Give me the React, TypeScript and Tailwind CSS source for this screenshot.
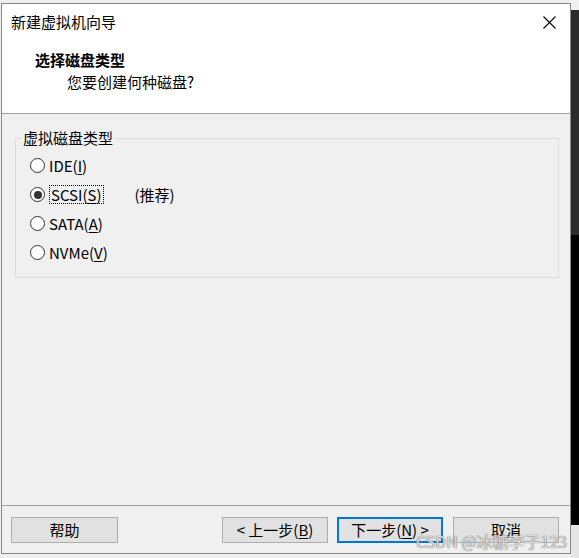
import React from "react";

const font = { fontFamily: '"Noto Sans CJK SC", "Noto Sans", sans-serif' };

function Radio({ checked }: { checked?: boolean }) {
  return (
    <span className="w-[15px] h-[15px] rounded-full border border-[#333333] bg-white flex items-center justify-center shrink-0">
      {checked && <span className="w-[8px] h-[8px] rounded-full bg-[#333333]" />}
    </span>
  );
}

function Row({ children, checked }: { children: React.ReactNode; checked?: boolean }) {
  return (
    <div className="h-[29px] flex items-center">
      <Radio checked={checked} />
      <div className="ml-[4px] flex items-center">{children}</div>
    </div>
  );
}

function Btn({ children, primary, className = "" }: { children: React.ReactNode; primary?: boolean; className?: string }) {
  return (
    <div
      className={
        "h-[26px] w-[106px] bg-[#e1e1e1] flex items-center justify-center text-[15px] leading-[20px] text-black " +
        (primary ? "border-2 border-[#0078d7] " : "border border-[#adadad] ") +
        className
      }
    >
      {children}
    </div>
  );
}

export default function App() {
  return (
    <div className="w-[579px] h-[558px] relative overflow-hidden bg-[#f0f0f0] flex" style={font}>
      <div className="w-[1px] shrink-0" />
      <div className="flex flex-col shrink-0">
        <div className="h-[3px]" />
        <div className="w-[570px] h-[551px] border border-[#888888] bg-[#f0f0f0] flex flex-col">
          {/* header */}
          <div className="h-[110px] bg-white border-b border-[#a0a0a0] flex flex-col shrink-0">
            <div className="mt-[8px] h-[20px] flex items-center justify-between pl-[9px] pr-[14px]">
              <span className="text-[15px] leading-[20px] text-black">新建虚拟机向导</span>
              <svg width="13" height="13" viewBox="0 0 13 13">
                <path d="M0.5 0.5 L12.5 12.5 M12.5 0.5 L0.5 12.5" stroke="#000" strokeWidth="1.1" fill="none" />
              </svg>
            </div>
            <div className="mt-[18px] ml-[33px] text-[15px] leading-[20px] font-bold text-black">选择磁盘类型</div>
            <div className="mt-[2px] ml-[65px] text-[15px] leading-[20px] text-black">您要创建何种磁盘?</div>
          </div>
          {/* body */}
          <div className="h-[391px] shrink-0 pt-[24px] pl-[13px] pr-[11px]">
            <div className="relative border border-[#dcdcdc] pt-[12px] pb-[10px] pl-[14px] text-[15px] leading-[20px] text-black">
              <span className="absolute left-[5px] top-[-11px] px-[2px] bg-[#f0f0f0] text-[15px] leading-[20px]">
                虚拟磁盘类型
              </span>
              <Row>
                <span>
                  IDE(<u className="underline-offset-[2px]">I</u>)
                </span>
              </Row>
              <Row checked>
                <span className="border border-dotted border-black px-[1px] leading-[17px]">
                  SCSI(<u className="underline-offset-[2px]">S</u>)
                </span>
                <span className="ml-[31px]">(推荐)</span>
              </Row>
              <Row>
                <span>
                  SATA(<u className="underline-offset-[2px]">A</u>)
                </span>
              </Row>
              <Row>
                <span>
                  NVMe(<u className="underline-offset-[2px]">V</u>)
                </span>
              </Row>
            </div>
          </div>
          {/* footer */}
          <div className="border-t border-[#a0a0a0] flex-1 flex pt-[11px] pl-[9px] pr-[11px]">
            <Btn className="w-[107px]">帮助</Btn>
            <div className="flex-1" />
            <Btn>
              &lt;&nbsp;上一步(<u className="underline-offset-[2px]">B</u>)
            </Btn>
            <Btn primary className="ml-[9px]">
              下一步(<u className="underline-offset-[2px]">N</u>)&nbsp;&gt;
            </Btn>
            <Btn className="ml-[10px]">取消</Btn>
          </div>
        </div>
        <div className="flex-1" />
      </div>
      <div className="w-[8px] shrink-0 flex flex-col">
        <div className="h-[10px] bg-[#f0f0f0]" />
        <div className="h-[225px] bg-[#2b2b2b]" />
        <div className="h-[290px] bg-black" />
        <div className="flex-1 bg-[#e6e6e6]" />
      </div>
      <div
        className="absolute left-[416px] top-[530px] text-[16px] leading-[22px] text-[#dcdcdc] [text-shadow:0_0_1px_#777777,0_0_1px_#777777]"
        style={font}
      >
        CSDN @冰糖李子123
      </div>
    </div>
  );
}
